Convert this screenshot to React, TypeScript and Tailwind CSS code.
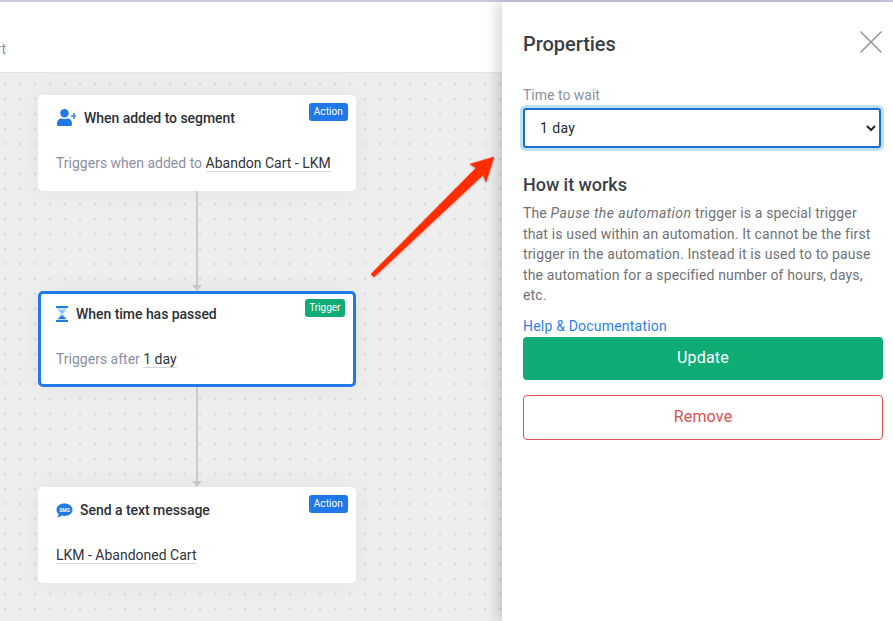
import { FaUser } from "react-icons/fa";
import { X } from "lucide-react";

function Badge({ label, green }: { label: string; green?: boolean }) {
  return (
    <span
      className={`absolute flex h-[18px] items-center rounded-[3px] leading-none text-white ${
        green
          ? "right-[8px] top-[5px] bg-[#10ac76] px-[4.5px] text-[10px]"
          : "right-[8px] top-[8px] bg-[#2079e6] px-[5px] text-[10px] tracking-[0.1px]"
      }`}
    >
      {label}
    </span>
  );
}

function Linked({ children }: { children: string }) {
  return <span className="border-b border-[#d3d8e0] text-[#30343a]">{children}</span>;
}

function UserPlusIcon() {
  return (
    <span className="relative mr-[8px] flex h-[18px] w-[20px] shrink-0 text-[#2079e6]">
      <FaUser size={17} />
      <span className="absolute right-[1.500px] top-[4px] h-[6px] w-[2px] bg-[#5a9dee]" />
      <span className="absolute right-0 top-[6px] h-[2px] w-[5px] bg-[#5a9dee]" />
    </span>
  );
}

function HourglassIcon() {
  return (
    <svg width="12" height="16" viewBox="0 0 12 16" className="mr-[8px] shrink-0">
      <path d="M1.500 2h9v2.500L7 8l3.500 3.500V14h-9v-2.500L5 8 1.500 4.500z" fill="#c3dcf8" />
      <path d="M6 9L10 13H2z" fill="#2079e6" />
      <path d="M3 4.500h6L6 7.500z" fill="#7fb4f1" />
      <rect width="12" height="2" fill="#2079e6" />
      <rect y="14" width="12" height="2" fill="#2079e6" />
    </svg>
  );
}

function SmsIcon() {
  return (
    <svg width="17" height="15" viewBox="0 0 17 15" className="mr-[7px] shrink-0">
      <path d="M8.500 0.500c4.500 0 8 2.700 8 6.200s-3.500 6.200-8 6.200c-1 0-1.900-.1-2.800-.4C4.700 13.500 3 14.400 1 14.500c1-.9 1.600-2 1.800-3.200C1.300 10.100.5 8.500.5 6.700c0-3.500 3.500-6.200 8-6.200z" fill="#2079e6" />
      <text x="8.500" y="8.600" textAnchor="middle" fontSize="5" fontWeight="700" fill="#fff" fontFamily="Roboto, sans-serif">
        SMS
      </text>
    </svg>
  );
}

function Connector() {
  return (
    <div className="relative flex h-[100px] w-[318px] flex-col items-center">
      <div className="w-[2px] flex-1 bg-[#c6ccd4]" />
      <svg width="10" height="6" viewBox="0 0 10 6" className="shrink-0">
        <path d="M0 0h10L5 6z" fill="#c6ccd4" />
      </svg>
    </div>
  );
}

function NodeCard({
  selected,
  icon,
  title,
  badge,
  children,
}: {
  selected?: boolean;
  icon: React.ReactNode;
  title: string;
  badge: React.ReactNode;
  children: React.ReactNode;
}) {
  return (
    <div
      className={`relative h-[96px] w-[318px] rounded-[5px] bg-white shadow-[0_0_24px_rgba(0,0,0,0.05)] ${
        selected ? "border-[3px] border-[#2079e6] px-[15px] pt-[11px]" : "px-[18px] pt-[14px]"
      }`}
    >
      {badge}
      <div className="flex h-[18px] items-center text-[14px] font-medium tracking-[-0.04px] text-[#2b3035]">
        {icon}
        {title}
      </div>
      <div className="mt-[27px] text-[14px] leading-[18px] text-[#8c8f9f]">{children}</div>
    </div>
  );
}

export default function App() {
  return (
    <div className="flex h-[621px] w-[893px] flex-col overflow-hidden bg-white font-['Roboto',sans-serif]">
      <div className="h-[2px] shrink-0 bg-[#c9c9de]" />
      <div className="flex min-h-0 flex-1">
        <div className="relative min-w-0 flex-1">
          <div className="flex h-[71px] items-end border-b border-[#e6e6e6] bg-white pb-[14px]">
            <div className="flex w-[6px] justify-end overflow-hidden whitespace-nowrap text-[14px] leading-[18px] text-[#8c8f9f]">
              Abandoned Cart
            </div>
          </div>
          <div className="relative h-[548px] bg-[#eeeeee] pl-[38px] pt-[22px]">
            {/* canvas grid of small plus marks */}
            <svg className="absolute inset-0 h-full w-full">
              <defs>
                <pattern id="grid" x="3" y="9" width="15" height="15" patternUnits="userSpaceOnUse">
                  <path d="M2 0.500v3M0.500 2h3" stroke="#d6d6d6" strokeWidth="1" fill="none" />
                </pattern>
              </defs>
              <rect width="100%" height="100%" fill="url(#grid)" />
            </svg>
            <NodeCard icon={<UserPlusIcon />} title="When added to segment" badge={<Badge label="Action" />}>
              Triggers when added to <Linked>Abandon Cart - LKM</Linked>
            </NodeCard>
            <Connector />
            <NodeCard selected icon={<HourglassIcon />} title="When time has passed" badge={<Badge label="Trigger" green />}>
              Triggers after <Linked>1 day</Linked>
            </NodeCard>
            <Connector />
            <NodeCard icon={<SmsIcon />} title="Send a text message" badge={<Badge label="Action" />}>
              <Linked>LKM - Abandoned Cart</Linked>
            </NodeCard>
          </div>
          {/* annotation arrow drawn on top of the canvas */}
          <svg width="140" height="130" viewBox="0 0 140 130" className="absolute left-[365px] top-[150px] drop-shadow-[0_1px_1px_rgba(0,0,0,0.25)]">
            <path d="M6 122L111 16L105 12L129 5L121 30L118 23L9 125Z" fill="#ff2d00" stroke="#ff2d00" strokeWidth="0.5" strokeLinejoin="round" />
          </svg>
        </div>
        <div className="relative flex w-[391px] shrink-0 flex-col bg-white pl-[21px] pr-[10px] pt-[29px] shadow-[-5px_0_12px_rgba(0,0,0,0.16)]">
          <X size={40} strokeWidth={0.95} className="absolute right-[2px] top-[20px] text-[#949494]" />
          <h2 className="text-[20px] font-medium leading-[26px] tracking-[-0.05px] text-[#3a3f47]">Properties</h2>
          <label className="mt-[29px] text-[14px] leading-[18px] text-[#8c8f9f]">Time to wait</label>
          <select className="mt-[4px] h-[40px] w-[358px] rounded-[3px] border-2 border-[#1a6fc9] bg-white pl-[11px] text-[14px] tracking-[0.4px] text-[#24292e] shadow-[0_0_0_3px_#bfe0f3] outline-none">
            <option>1 day</option>
          </select>
          <h3 className="mt-[25px] text-[18px] font-medium leading-[24px] tracking-[-0.05px] text-[#3a3f47]">How it works</h3>
          <p className="mt-[6px] w-[350px] text-[14px] leading-[20.6px] tracking-[0.15px] text-[#6f7276]">
            The <em className="tracking-[0.4px]">Pause the automation</em> trigger is a special trigger that is used
            within an automation. It cannot be the first trigger in the automation. Instead it is used to to pause the
            automation for a specified number of hours, days, etc.
          </p>
          <a className="mt-[11px] text-[14px] leading-[18px] tracking-[0.2px] text-[#2d7ff0]">Help &amp; Documentation</a>
          <button className="mt-[2px] h-[43px] w-[360px] rounded-[4px] bg-[#10ac76] text-[16px] tracking-[0.2px] text-white">
            Update
          </button>
          <button className="mt-[15px] h-[45px] w-[360px] rounded-[4px] border border-[#dc5050] bg-white text-[16px] tracking-[0.2px] text-[#dc5050]">
            Remove
          </button>
        </div>
      </div>
    </div>
  );
}
